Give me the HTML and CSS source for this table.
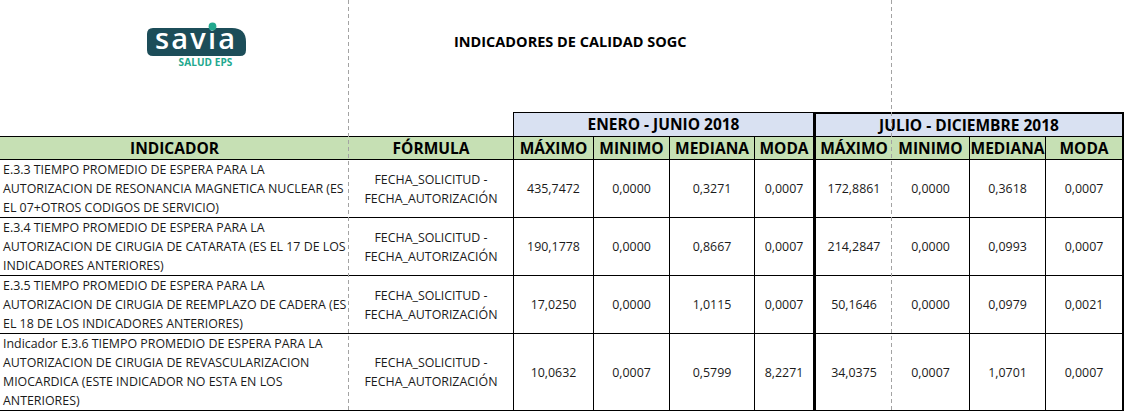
FILE: index.html
```html
<!DOCTYPE html>
<html lang="es">
<head>
<meta charset="utf-8">
<title>Indicadores de Calidad SOGC</title>
<link rel="stylesheet" href="styles.css">
</head>
<body>
<div class="page">
  <header class="top">
    <svg class="logo" viewBox="0 0 102 50" width="102" height="50" aria-label="savia SALUD EPS">
      <path d="M1 14 Q1 8 7 8 H86 Q100 8 100 22 V30 Q100 36 94 36 H7 Q1 36 1 30 Z" fill="#1c4d59"/>
      <text x="9" y="29" class="logo-word" textLength="80" lengthAdjust="spacing">savia</text>
      <circle cx="66.5" cy="6.5" r="3.9" fill="#22a88e"/>
      <text x="59.5" y="46" class="logo-sub" text-anchor="middle">SALUD EPS</text>
    </svg>
    <h1 class="title">INDICADORES DE CALIDAD SOGC</h1>
  </header>

  <div class="sheet">
    <div class="cell gap"></div>
    <div class="cell period p1">ENERO - JUNIO 2018</div>
    <div class="cell period p2">JULIO - DICIEMBRE 2018</div>

    <div class="cell head c-ind">INDICADOR</div>
    <div class="cell head c-form">FÓRMULA</div>
    <div class="cell head c-n">MÁXIMO</div>
    <div class="cell head c-n">MINIMO</div>
    <div class="cell head c-n">MEDIANA</div>
    <div class="cell head c-moda1">MODA</div>
    <div class="cell head c-max2">MÁXIMO</div>
    <div class="cell head c-n">MINIMO</div>
    <div class="cell head c-n">MEDIANA</div>
    <div class="cell head c-moda2">MODA</div>

    <div class="cell c-ind"><p>E.3.3 TIEMPO PROMEDIO DE ESPERA PARA LA<br>AUTORIZACION DE RESONANCIA MAGNETICA NUCLEAR (ES<br>EL 07+OTROS CODIGOS DE SERVICIO)</p></div>
    <div class="cell c-form"><p>FECHA_SOLICITUD -<br>FECHA_AUTORIZACIÓN</p></div>
    <div class="cell c-n">435,7472</div>
    <div class="cell c-n">0,0000</div>
    <div class="cell c-n">0,3271</div>
    <div class="cell c-moda1">0,0007</div>
    <div class="cell c-max2">172,8861</div>
    <div class="cell c-n">0,0000</div>
    <div class="cell c-n">0,3618</div>
    <div class="cell c-moda2">0,0007</div>

    <div class="cell c-ind"><p>E.3.4 TIEMPO PROMEDIO DE ESPERA PARA LA<br>AUTORIZACION DE CIRUGIA DE CATARATA (ES EL 17 DE LOS<br>INDICADORES ANTERIORES)</p></div>
    <div class="cell c-form"><p>FECHA_SOLICITUD -<br>FECHA_AUTORIZACIÓN</p></div>
    <div class="cell c-n">190,1778</div>
    <div class="cell c-n">0,0000</div>
    <div class="cell c-n">0,8667</div>
    <div class="cell c-moda1">0,0007</div>
    <div class="cell c-max2">214,2847</div>
    <div class="cell c-n">0,0000</div>
    <div class="cell c-n">0,0993</div>
    <div class="cell c-moda2">0,0007</div>

    <div class="cell c-ind"><p>E.3.5 TIEMPO PROMEDIO DE ESPERA PARA LA<br>AUTORIZACION DE CIRUGIA DE REEMPLAZO DE CADERA (ES<br>EL 18 DE LOS INDICADORES ANTERIORES)</p></div>
    <div class="cell c-form"><p>FECHA_SOLICITUD -<br>FECHA_AUTORIZACIÓN</p></div>
    <div class="cell c-n">17,0250</div>
    <div class="cell c-n">0,0000</div>
    <div class="cell c-n">1,0115</div>
    <div class="cell c-moda1">0,0007</div>
    <div class="cell c-max2">50,1646</div>
    <div class="cell c-n">0,0000</div>
    <div class="cell c-n">0,0979</div>
    <div class="cell c-moda2">0,0021</div>

    <div class="cell c-ind last"><p>Indicador E.3.6 TIEMPO PROMEDIO DE ESPERA PARA LA<br>AUTORIZACION DE CIRUGIA DE REVASCULARIZACION<br>MIOCARDICA (ESTE INDICADOR NO ESTA EN LOS<br>ANTERIORES)</p></div>
    <div class="cell c-form last"><p>FECHA_SOLICITUD -<br>FECHA_AUTORIZACIÓN</p></div>
    <div class="cell c-n last">10,0632</div>
    <div class="cell c-n last">0,0007</div>
    <div class="cell c-n last">0,5799</div>
    <div class="cell c-moda1 last">8,2271</div>
    <div class="cell c-max2 last">34,0375</div>
    <div class="cell c-n last">0,0007</div>
    <div class="cell c-n last">1,0701</div>
    <div class="cell c-moda2 last">0,0007</div>
  </div>

  <div class="pagebreak pb1"></div>
  <div class="pagebreak pb2"></div>
</div>
</body>
</html>
```

FILE: styles.css
```css
html, body {
  margin: 0;
  padding: 0;
  background: #ffffff;
}

body {
  font-family: "Open Sans", "Liberation Sans", sans-serif;
  color: #1a1a1a;
}

.page {
  position: relative;
  width: 1127px;
  height: 413px;
  overflow: hidden;
}

.top {
  display: flex;
  align-items: flex-start;
  height: 112px;
  padding-left: 146px;
  box-sizing: border-box;
}

.logo {
  display: block;
  margin-top: 20px;
  flex: none;
}

.logo-word {
  font-family: "Open Sans", sans-serif;
  font-weight: 600;
  font-size: 29px;
  fill: #ffffff;
}

.logo-sub {
  font-family: "Open Sans", sans-serif;
  font-weight: 700;
  font-size: 10px;
  letter-spacing: 0.1px;
  fill: #22a88e;
}

.title {
  margin: 32px 0 0 206px;
  font-size: 14.5px;
  line-height: 20px;
  font-weight: 700;
  color: #000000;
}

.sheet {
  display: grid;
  grid-template-columns: 349px 165px 80px 76px 85px 61px 76px 78px 76px 78px;
  grid-template-rows: 24px 23px 58px 58px 58px 78px;
}

.cell {
  box-sizing: border-box;
  display: flex;
  align-items: center;
  justify-content: center;
  text-align: center;
  border-top: 1px solid #000000;
  font-size: 12.4px;
  line-height: 19px;
  white-space: nowrap;
}

.cell p {
  margin: 0;
}

.gap {
  grid-column: span 2;
  border-top: none;
  border-right: 1px solid #000000;
}

.period {
  grid-column: span 4;
  background: #d9e1f2;
  font-weight: 700;
  font-size: 15.5px;
  color: #000000;
}

.p1 {
  border-right: 3px solid #000000;
}

.p2 {
  border-top: 2px solid #000000;
  border-right: 2px solid #000000;
}

.head {
  background: #c6e0b4;
  font-weight: 700;
  font-size: 15.5px;
  color: #000000;
  overflow: visible;
}

.c-ind {
  justify-content: flex-start;
  text-align: left;
  padding-left: 3px;
}

.head.c-ind {
  justify-content: center;
  padding-left: 0;
}

.c-form,
.c-n {
  border-right: 1px solid #000000;
}

.c-moda1 {
  border-right: 3px solid #000000;
}

.c-moda2 {
  border-right: 2px solid #000000;
}

.last {
  border-bottom: 1px solid #000000;
}

.pagebreak {
  position: absolute;
  top: 0;
  bottom: 0;
  width: 1px;
  background: repeating-linear-gradient(to bottom, #a3a3a3 0, #a3a3a3 4px, transparent 4px, transparent 7px);
}

.pb1 {
  left: 348px;
}

.pb2 {
  left: 891px;
}
```
